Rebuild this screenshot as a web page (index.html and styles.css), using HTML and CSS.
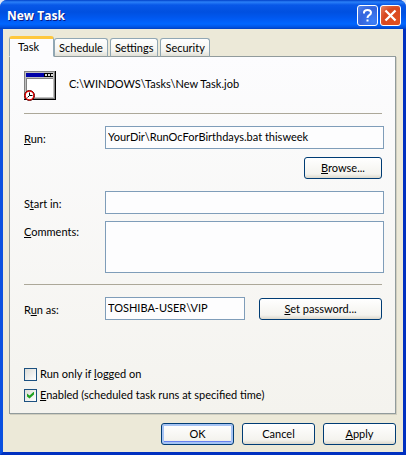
FILE: index.html
```html
<!DOCTYPE html>
<html lang="en">
<head>
  <meta charset="UTF-8" />
  <meta name="viewport" content="width=device-width, initial-scale=1" />
  <title>New Task</title>
  <link rel="stylesheet" href="styles.css">
</head>
<body>
  <div class="window">
    <header class="title-bar">
      <h1>New Task</h1>
      <button type="button" class="caption-btn help" aria-label="Help">
        <svg width="19" height="19" viewBox="0 0 19 19" fill="none" stroke="#fff" stroke-width="2">
          <path d="M6 7.5V6.5Q6 4 9.5 4T13 6.8Q13 8.3 11 9.3Q9.5 10.2 9.5 12" />
          <path d="M9.5 13.5V15.5" />
        </svg>
      </button>
      <button type="button" class="caption-btn close" aria-label="Close">
        <svg width="19" height="19" viewBox="0 0 19 19" fill="none" stroke="#fff" stroke-width="2.3">
          <path d="M4.5 4.5L14.5 14.5M14.5 4.5L4.5 14.5" />
        </svg>
      </button>
    </header>

    <form class="dialog">
      <div class="tabs" role="tablist">
        <button type="button" class="tab active" role="tab" aria-selected="true">Task</button>
        <button type="button" class="tab" role="tab">Schedule</button>
        <button type="button" class="tab" role="tab">Settings</button>
        <button type="button" class="tab" role="tab">Security</button>
      </div>

      <div class="panel" role="tabpanel">
        <div class="job">
          <svg width="32" height="31" viewBox="0 0 32 31" shape-rendering="crispEdges">
            <rect x="0" y="0" width="32" height="29" fill="#000" />
            <rect x="0" y="0" width="31" height="28" fill="#808080" />
            <rect x="1" y="1" width="29" height="26" fill="#c0c0c0" />
            <rect x="2" y="2" width="27" height="4" fill="#0000a8" />
            <rect x="20" y="2" width="9" height="4" fill="#000" />
            <path d="M21 3h2v2h-2zM24 3h2v2h-2zM27 3h2v2h-2z" fill="#d8d8d8" />
            <rect x="2" y="7" width="27" height="19" fill="#808080" />
            <rect x="3" y="8" width="26" height="18" fill="#fff" />
            <g shape-rendering="auto">
              <circle cx="5.5" cy="24.5" r="5" fill="#fff" stroke="#400000" />
              <circle cx="5.5" cy="24.5" r="4.3" fill="#fff" stroke="#e00000" stroke-width="1.3" />
              <path d="M5.5 21.5V24.5H8.5M5.5 24.5L3.5 26.5" fill="none" stroke="#000" />
            </g>
          </svg>
          <span>C:\WINDOWS\Tasks\New Task.job</span>
        </div>

        <hr>

        <div class="row">
          <label for="run"><u>R</u>un:</label>
          <input type="text" id="run" value="YourDir\RunOcForBirthdays.bat thisweek">
        </div>
        <div class="actions">
          <button type="button" class="btn browse"><u>B</u>rowse...</button>
        </div>
        <div class="row">
          <label for="start">S<u>t</u>art in:</label>
          <input type="text" id="start">
        </div>
        <div class="row comments">
          <label for="comments"><u>C</u>omments:</label>
          <textarea id="comments"></textarea>
        </div>

        <hr>

        <div class="row run-as">
          <label for="runas">R<u>u</u>n as:</label>
          <input type="text" id="runas" value="TOSHIBA-USER\VIP">
          <button type="button" class="btn password"><u>S</u>et password...</button>
        </div>

        <div class="checks">
          <label><input type="checkbox"><span>Run only if <u>l</u>ogged on</span></label>
          <label><input type="checkbox" checked><span><u>E</u>nabled (scheduled task runs at specified time)</span></label>
        </div>
      </div>

      <div class="footer">
        <button type="submit" class="btn default">OK</button>
        <button type="button" class="btn">Cancel</button>
        <button type="button" class="btn"><u>A</u>pply</button>
      </div>
    </form>
  </div>
</body>
</html>
```

FILE: styles.css
```css
:root {
  --face: #ece9d8;
  --field-border: #7f9db9;
  --btn-border: #003c74;
  --panel-border: #919b9c;
}

* {
  box-sizing: border-box;
}

body {
  margin: 0;
  background: #dfe6f5;
  color: #000;
  font-family: Lato, "Liberation Sans", Arial, sans-serif;
  font-size: 11px;
  line-height: 14px;
}

button, input, textarea {
  font: inherit;
  color: inherit;
}

u {
  text-underline-offset: 1px;
}

.window {
  display: flex;
  flex-direction: column;
  min-height: 100vh;
  border-radius: 7px 7px 0 0;
  overflow: hidden;
  background: #0a50e0;
}

/* title bar */
.title-bar {
  display: flex;
  align-items: center;
  gap: 2px;
  height: 29px;
  padding: 2px 5px 0 7px;
  background: linear-gradient(#0040c8 0, #2a80f8 2px, #0858e8 5px, #0050e0 12px, #0058f0 18px, #0066ff 24px, #0054e4 27px, #0040c0 29px);
}

.title-bar h1 {
  flex: 1;
  margin: 0;
  color: #fff;
  font-family: "Open Sans", "Noto Sans", sans-serif;
  font-size: 12px;
  font-weight: 700;
  text-shadow: 1px 1px #0a1883;
}

.caption-btn {
  display: flex;
  width: 21px;
  height: 21px;
  padding: 0;
  border: 1px solid #fff;
  border-radius: 3px;
}

.help {
  background: radial-gradient(circle at 80% 80%, #3c80f8, #3464dc 60%, #5888ec);
}

.close {
  background: radial-gradient(circle at 80% 80%, #e05020, #d84820 60%, #e88868);
}

/* body of the dialog */
.dialog {
  display: flex;
  flex: 1;
  flex-direction: column;
  padding: 7px 7px 7px 6px;
  border: solid #0a50e0;
  border-width: 0 3px 3px;
  border-right-color: #0030c0;
  border-bottom-color: #0030c0;
  background: var(--face);
}

.tabs {
  display: flex;
  align-items: flex-end;
  gap: 2px;
  margin-bottom: -1px;
  position: relative;
}

.tab {
  height: 19px;
  padding: 0 4px;
  border: 1px solid #91a7b4;
  border-bottom-color: var(--panel-border);
  border-radius: 3px 3px 0 0;
  background: linear-gradient(#fff, #f4f4f0 70%, #e0dfd6);
}

.tab.active {
  height: 21px;
  margin-right: -2px;
  padding: 0 14px 2px 8px;
  border-top: 3px solid #ffc83c;
  border-bottom-color: #fcfcfe;
  background: #fcfcfe;
}

.panel {
  display: flex;
  flex: 1;
  flex-direction: column;
  padding: 14px 11px 11px 14px;
  border: 1px solid var(--panel-border);
  background: linear-gradient(#fcfcfe, #f4f3ee);
  box-shadow: 1px 1px #d0cebf;
}

.job {
  display: flex;
  align-items: center;
  gap: 13px;
  margin-bottom: 11px;
}

.job span {
  padding-bottom: 6px;
}

hr {
  width: calc(100% - 2px);
  height: 1px;
  margin: 0 0 12px;
  border: solid #aca899;
  border-width: 1px 0 0;
}

.row {
  display: flex;
  align-items: center;
}

.row > label {
  width: 81px;
  padding-top: 2px;
}

.row input,
.row textarea {
  flex: 1;
  min-width: 0;
  height: 23px;
  padding: 0 2px 3px;
  border: 1px solid var(--field-border);
  background: #fdfdfe;
}

.row textarea {
  height: 52px;
  resize: none;
}

.comments {
  align-items: flex-start;
  margin: 7px 0 11px;
}

.comments > label {
  padding-top: 4px;
}

.row.run-as {
  padding-right: 2px;
}

.run-as .password {
  width: 123px;
  margin-left: 14px;
}

.actions {
  display: flex;
  justify-content: flex-end;
  padding: 8px 2px 12px 0;
}

.btn {
  height: 22px;
  padding: 0 4px;
  border: 1px solid var(--btn-border);
  border-radius: 3px;
  background: linear-gradient(#fff, #f4f3ee 80%, #dcd8cc);
}

.browse {
  width: 78px;
}

.checks {
  display: flex;
  flex-direction: column;
  gap: 7px;
  margin-top: auto;
}

.checks label {
  display: flex;
  align-items: center;
  gap: 3px;
}

.checks input {
  appearance: none;
  width: 13px;
  height: 13px;
  margin: 0;
  padding: 2px;
  border: 1px solid #1c5180;
  background: linear-gradient(135deg, #dcdcd7, #fff);
}

.checks input:checked::after {
  content: "";
  display: block;
  width: 7px;
  height: 7px;
  background: #21a121;
  clip-path: polygon(0 28%, 36% 58%, 100% 0, 100% 42%, 36% 100%, 0 72%);
}

.footer {
  display: flex;
  justify-content: flex-end;
  gap: 8px;
  padding-top: 9px;
}

.footer .btn {
  width: 73px;
}

.btn.default {
  box-shadow: inset 0 0 0 2px #a6c4f4, inset 0 -3px #6982ee;
}
```
